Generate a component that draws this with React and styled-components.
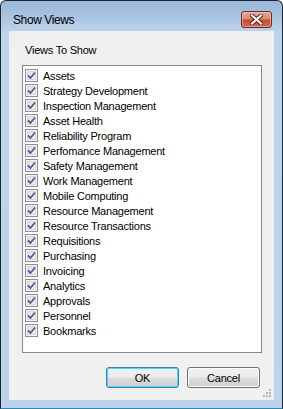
import React from "react";
import styled, { createGlobalStyle } from "styled-components";

const GlobalStyle = createGlobalStyle`
  html, body {
    margin: 0;
    padding: 0;
    background: #ffffff;
  }
  body {
    font-family: "Liberation Sans", Arial, sans-serif;
  }
`;

// 창 전체 프레임
const Window = styled.div`
  width: 283px;
  height: 409px;
  box-sizing: border-box;
  border: 1px solid #1c2633;
  border-bottom-color: #2a89b0;
  border-radius: 6px 6px 0 0;
  display: flex;
  flex-direction: column;
  background: linear-gradient(
    to bottom,
    #9ab7d8 0px,
    #aec8e4 20px,
    #bed4ec 32px,
    #bcd3eb 100%
  );
  overflow: hidden;
`;

// 타이틀 바
const TitleBar = styled.div`
  height: 30px;
  display: flex;
  align-items: flex-start;
  padding: 0 10px 0 12px;
`;

const Title = styled.div`
  margin-top: 12px;
  font-size: 12px;
  line-height: 15px;
  letter-spacing: -0.4px;
  color: #000;
`;

const CloseButton = styled.div`
  margin-left: auto;
  margin-top: 10px;
  width: 31px;
  height: 17px;
  box-sizing: border-box;
  border: 1px solid #6b2a24;
  border-radius: 3px;
  background: linear-gradient(
    to bottom,
    #eaa99a 0%,
    #db8772 45%,
    #c44c36 55%,
    #d46a50 100%
  );
  display: flex;
  align-items: center;
  justify-content: center;
  box-shadow: inset 0 0 0 1px rgba(255, 210, 200, 0.5);
`;

// 클라이언트 영역
const Client = styled.div`
  position: relative;
  flex: 1;
  margin: 0 8px 8px;
  background: #f0f0f0;
  display: flex;
  flex-direction: column;
  padding: 13px 0 0 13px;
  font-size: 11px;
  letter-spacing: -0.22px;
`;

const GroupLabel = styled.div`
  padding-left: 3px;
  line-height: 13px;
  color: #000;
  margin-bottom: 8px;
`;

const ListBox = styled.div`
  width: 240px;
  height: 288px;
  box-sizing: border-box;
  border: 1px solid #828790;
  background: #fff;
  padding: 2px 0 0 2px;
  display: flex;
  flex-direction: column;
`;

const Row = styled.label`
  height: 15px;
  display: flex;
  align-items: center;
  gap: 5px;
  color: #000;
  white-space: nowrap;
`;

const Box = styled.span`
  width: 13px;
  height: 13px;
  box-sizing: border-box;
  border: 1px solid #8f8f8f;
  background: linear-gradient(135deg, #dcdcdc 0%, #f6f6f6 100%);
  box-shadow: inset 0 0 0 1px #f4f4f4, inset 0 0 0 2px #d6d6d6;
  display: flex;
  align-items: center;
  justify-content: center;
  flex-shrink: 0;
`;

const ButtonRow = styled.div`
  display: flex;
  justify-content: flex-end;
  gap: 8px;
  margin-top: 14px;
  padding-right: 14px;
`;

const Button = styled.button`
  width: 73px;
  height: 21px;
  box-sizing: border-box;
  padding: 0;
  border: 1px solid ${(p) => (p.$default ? "#3c7fb1" : "#707070")};
  border-radius: 3px;
  background: linear-gradient(
    to bottom,
    #f2f2f2 0%,
    #ebebeb 48%,
    #dddddd 52%,
    #cfcfcf 100%
  );
  box-shadow: ${(p) =>
    p.$default ? "inset 0 0 0 1px #48d8fb" : "inset 0 0 0 1px #fcfcfc"};
  font-family: "Liberation Sans", Arial, sans-serif;
  font-size: 11px;
  letter-spacing: -0.22px;
  color: #000;
`;

const Grip = styled.svg`
  position: absolute;
  right: 3px;
  bottom: 3px;
`;

const views = [
  "Assets",
  "Strategy Development",
  "Inspection Management",
  "Asset Health",
  "Reliability Program",
  "Perfomance Management",
  "Safety Management",
  "Work Management",
  "Mobile Computing",
  "Resource Management",
  "Resource Transactions",
  "Requisitions",
  "Purchasing",
  "Invoicing",
  "Analytics",
  "Approvals",
  "Personnel",
  "Bookmarks",
];

const CheckMark = () => (
  <svg width="9" height="9" viewBox="0 0 9 9">
    <path
      d="M1 4.5 L3.5 7 L8 1.5"
      fill="none"
      stroke="#4a5f97"
      strokeWidth="1.8"
      strokeLinejoin="miter"
    />
  </svg>
);

const CloseGlyph = () => (
  <svg width="13" height="11" viewBox="0 0 13 11">
    <path
      d="M2 1.5 L11 9.5 M11 1.5 L2 9.5"
      stroke="#5a1d18"
      strokeWidth="4"
      strokeLinecap="square"
    />
    <path
      d="M2 1.5 L11 9.5 M11 1.5 L2 9.5"
      stroke="#ffffff"
      strokeWidth="2.2"
      strokeLinecap="square"
    />
  </svg>
);

const App = () => {
  return (
    <>
      <GlobalStyle />
      <Window>
        <TitleBar>
          <Title>Show Views</Title>
          <CloseButton>
            <CloseGlyph />
          </CloseButton>
        </TitleBar>
        <Client>
          <GroupLabel>Views To Show</GroupLabel>
          <ListBox>
            {views.map((v) => (
              <Row key={v}>
                <Box>
                  <CheckMark />
                </Box>
                {v}
              </Row>
            ))}
          </ListBox>
          <ButtonRow>
            <Button $default>OK</Button>
            <Button>Cancel</Button>
          </ButtonRow>
          <Grip width="8" height="8" viewBox="0 0 8 8">
            <g fill="#b5b5b5">
              <rect x="6" y="0" width="2" height="2" />
              <rect x="3" y="3" width="2" height="2" />
              <rect x="6" y="3" width="2" height="2" />
              <rect x="0" y="6" width="2" height="2" />
              <rect x="3" y="6" width="2" height="2" />
              <rect x="6" y="6" width="2" height="2" />
            </g>
          </Grip>
        </Client>
      </Window>
    </>
  );
};

export default App;
